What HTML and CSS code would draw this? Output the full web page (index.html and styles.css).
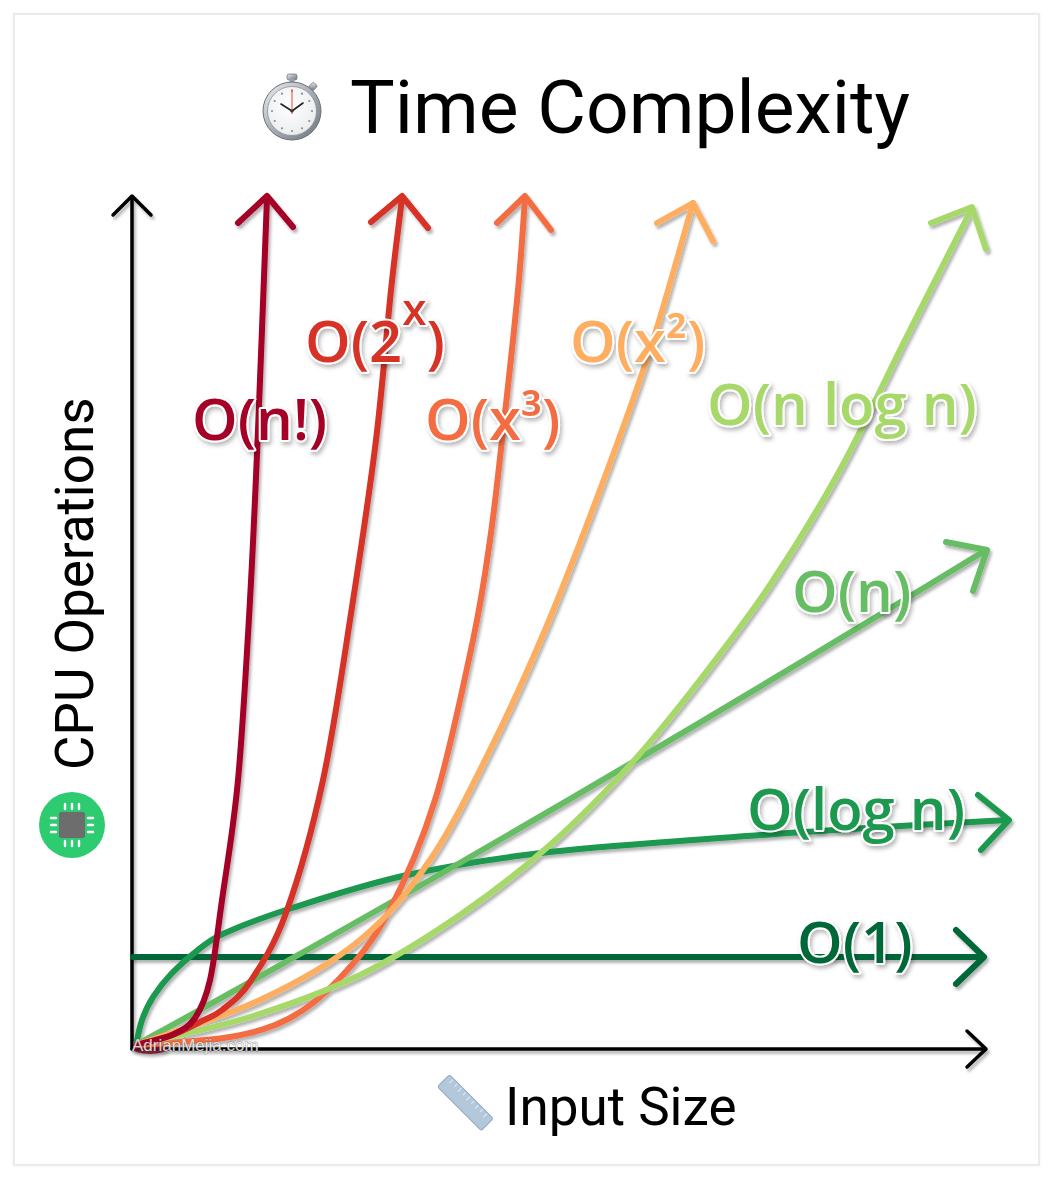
FILE: index.html
```html
<!DOCTYPE html>
<html lang="en">
<head>
<meta charset="utf-8">
<title>Time Complexity</title>
<link rel="stylesheet" href="styles.css">
</head>
<body>
<div class="card">
  <header class="title-row">
    <svg class="stopwatch" viewBox="0 0 68 68" aria-hidden="true">
      <defs>
        <linearGradient id="swCase" x1="0" y1="0" x2="1" y2="1">
          <stop offset="0" stop-color="#eef0f2"/>
          <stop offset="0.5" stop-color="#a7adb4"/>
          <stop offset="1" stop-color="#6c737b"/>
        </linearGradient>
        <radialGradient id="swFace" cx="0.45" cy="0.4" r="0.7">
          <stop offset="0" stop-color="#ffffff"/>
          <stop offset="0.8" stop-color="#eceef0"/>
          <stop offset="1" stop-color="#c6cbd0"/>
        </radialGradient>
      </defs>
      <rect class="sw-metal" x="29" y="1" width="10" height="6" rx="2"/>
      <rect class="sw-stem" x="31.5" y="6" width="5" height="5"/>
      <rect class="sw-metal" x="52" y="10" width="6" height="7" rx="1.5" transform="rotate(45 55 13.5)"/>
      <circle class="sw-case" cx="34" cy="38" r="29"/>
      <circle class="sw-face" cx="34" cy="38" r="24.5"/>
      <g class="sw-ticks">
        <circle cx="34" cy="18" r="1.1"/><circle cx="44" cy="20.7" r="1.1"/><circle cx="51.3" cy="28" r="1.1"/>
        <circle cx="54" cy="38" r="1.1"/><circle cx="51.3" cy="48" r="1.1"/><circle cx="44" cy="55.3" r="1.1"/>
        <circle cx="34" cy="58" r="1.1"/><circle cx="24" cy="55.3" r="1.1"/><circle cx="16.7" cy="48" r="1.1"/>
        <circle cx="14" cy="38" r="1.1"/><circle cx="16.7" cy="28" r="1.1"/><circle cx="24" cy="20.7" r="1.1"/>
      </g>
      <path class="sw-hand" d="M34 38 L23 31"/>
      <path class="sw-hand" d="M34 38 L45 30"/>
      <path class="sw-sec" d="M34 41 L34 16"/>
      <circle class="sw-pin" cx="34" cy="38" r="1.6"/>
    </svg>
    <h1 class="title">Time Complexity</h1>
  </header>

  <svg class="chart" width="1023" height="999" viewBox="15 165 1023 999">
    <defs>
      <filter id="lineShadow" x="-10%" y="-10%" width="120%" height="120%">
        <feDropShadow dx="2" dy="3" stdDeviation="1.6" flood-color="#000" flood-opacity="0.3"/>
      </filter>
      <filter id="labelShadow" x="-10%" y="-20%" width="130%" height="150%">
        <feDropShadow dx="2" dy="3" stdDeviation="2" flood-color="#000" flood-opacity="0.28"/>
      </filter>
    </defs>

    <!-- axes -->
    <g filter="url(#lineShadow)">
      <path class="axis" d="M132 1049 L132 198"/>
      <path class="axis" d="M113 215 L132 196 L151 215"/>
      <path class="axis" d="M132 1049 L984 1049"/>
      <path class="axis" d="M967 1031 L986 1049 L967 1067"/>
    </g>

    <!-- curves -->
    <g filter="url(#lineShadow)">
      <ellipse class="origin-blob" cx="150" cy="1049" rx="17" ry="5"/>

      <path class="curve c-one" d="M133 957 L983 957"/>
      <path class="curve c-one" d="M956 930 L984 957 L956 984"/>

      <path class="curve c-log" d="M136 1045 C137 1040.8 139.2 1028 142 1020 C144.8 1012 148 1004.8 153 997 C158 989.2 164.5 980.8 172 973 C179.5 965.2 189.2 956.7 198 950 C206.8 943.3 209.3 940 225 933 C240.7 926 261.7 917.7 292 908 C322.3 898.3 365.5 884.2 407 875 C448.5 865.8 488.8 859.2 541 853 C593.2 846.8 665.7 842.2 720 838 C774.3 833.8 819 831 867 828 C915 825 984.5 821.3 1008 820"/>
      <path class="curve c-log" d="M978 795 L1009 820 L981 850"/>

      <path class="curve c-n" d="M136 1045 Q520 835 986 550"/>
      <path class="curve c-n" d="M946 542 L987 550 L973 591"/>

      <path class="curve c-cube" d="M136 1045 C151.7 1043.7 204.3 1041.5 230 1037 C255.7 1032.5 271.7 1027.8 290 1018 C308.3 1008.2 323.7 995.5 340 978 C356.3 960.5 372.2 942.7 388 913 C403.8 883.3 420.8 845.5 435 800 C449.2 754.5 463.8 683.3 473 640 C482.2 596.7 485.2 573.3 490 540 C494.8 506.7 497.3 481.7 502 440 C506.7 398.3 514.2 330.3 518 290 C521.8 249.7 523.8 213.3 525 198"/>
      <path class="curve c-cube" d="M497 223 L525 196 L551 230"/>

      <path class="curve c-sq" d="M136 1045 C156.7 1037.5 222.7 1017.5 260 1000 C297.3 982.5 331.7 963.3 360 940 C388.3 916.7 408.3 891.7 430 860 C451.7 828.3 470.8 788.3 490 750 C509.2 711.7 526.7 673.3 545 630 C563.3 586.7 582.5 536.7 600 490 C617.5 443.3 634.5 397.8 650 350 C665.5 302.2 685.8 227.5 693 203"/>
      <path class="curve c-sq" d="M657 223 L693 203 L713 241"/>

      <path class="curve c-nlog" d="M136 1045 C155 1040.3 212.7 1028.7 250 1017 C287.3 1005.3 325 992 360 975 C395 958 428.3 936.7 460 915 C491.7 893.3 521.7 870 550 845 C578.3 820 605 792.5 630 765 C655 737.5 676.7 710 700 680 C723.3 650 746.7 620 770 585 C793.3 550 817.5 510.8 840 470 C862.5 429.2 883 383.7 905 340 C927 296.3 960.8 230 972 208"/>
      <path class="curve c-nlog" d="M931 223 L972 207 L986 249"/>

      <path class="curve c-exp" d="M136 1045 C142 1043.3 161.3 1038.8 172 1035 C182.7 1031.2 191.7 1026.2 200 1022 C208.3 1017.8 213.7 1016.7 222 1010 C230.3 1003.3 239.3 998.2 250 982 C260.7 965.8 273.8 946.7 286 913 C298.2 879.3 312 831 323 780 C334 729 343.2 663.7 352 607 C360.8 550.3 369.5 492.8 376 440 C382.5 387.2 386.7 330.3 391 290 C395.3 249.7 400.2 213.3 402 198"/>
      <path class="curve c-exp" d="M371 222 L402 196 L428 228"/>

      <path class="curve c-fact" d="M136 1045 C142 1043.3 162.2 1039.5 172 1035 C181.8 1030.5 188.7 1027.2 195 1018 C201.3 1008.8 205.5 999.7 210 980 C214.5 960.3 217.3 933.3 222 900 C226.7 866.7 233.3 830 238 780 C242.7 730 246.7 658.3 250 600 C253.3 541.7 255.2 497 258 430 C260.8 363 265.5 236.7 267 198"/>
      <path class="curve c-fact" d="M238 223 L267 196 L293 227"/>
    </g>

    <text class="watermark" x="132" y="1051">AdrianMejia.com</text>

    <!-- labels -->
    <g filter="url(#labelShadow)">
      <text class="lbl l-fact" x="192" y="440">O(n!)</text>
      <text class="lbl l-exp" x="305" y="362">O(2<tspan class="sup" dy="-37">x</tspan><tspan dy="37">)</tspan></text>
      <text class="lbl l-cube" x="425" y="440">O(x³)</text>
      <text class="lbl l-sq" x="570" y="362">O(x²)</text>
      <text class="lbl l-nlog" x="707" y="425">O(n log n)</text>
      <text class="lbl l-n" x="792" y="612">O(n)</text>
      <text class="lbl l-log" x="747" y="830">O(log n)</text>
      <text class="lbl l-one" x="797" y="963">O(1)</text>
    </g>

    <!-- y axis label with CPU icon -->
    <g class="cpu">
      <circle class="cpu-bg" cx="72" cy="825" r="33"/>
      <rect class="cpu-chip" x="59" y="812" width="26" height="26" rx="2"/>
      <path class="cpu-pins" d="M65 804 V809 M72 804 V809 M79 804 V809 M65 841 V846 M72 841 V846 M79 841 V846 M51 818 H56 M51 825 H56 M51 832 H56 M88 818 H93 M88 825 H93 M88 832 H93"/>
    </g>
    <text class="axis-label" transform="translate(93 770) rotate(-90)">CPU Operations</text>

    <!-- x axis label with ruler icon -->
    <g class="ruler" transform="rotate(45 465 1103)">
      <rect class="ruler-body" x="434" y="1094" width="62" height="17" rx="2"/>
      <path class="ruler-ticks" d="M440 1095 V1100 M446 1095 V1099 M452 1095 V1100 M458 1095 V1099 M464 1095 V1100 M470 1095 V1099 M476 1095 V1100 M482 1095 V1099 M488 1095 V1100"/>
    </g>
    <text class="axis-label" x="505" y="1125">Input Size</text>
  </svg>
</div>
</body>
</html>
```

FILE: styles.css
```css
html, body {
  margin: 0;
  padding: 0;
  background: #ffffff;
}

.card {
  margin: 13px;
  width: 1023px;
  height: 1149px;
  border: 2px solid #ebebeb;
  box-shadow: 0 0 3px rgba(0, 0, 0, 0.05);
  background: #ffffff;
  overflow: hidden;
}

.title-row {
  display: flex;
  align-items: flex-start;
  gap: 24px;
  height: 150px;
  padding: 55px 0 0 243px;
  box-sizing: border-box;
}

.stopwatch {
  flex: none;
  width: 68px;
  height: 68px;
  margin-top: 3px;
}

.sw-metal { fill: url(#swCase); stroke: #777; stroke-width: 0.8; }
.sw-stem { fill: #9aa0a7; }
.sw-case { fill: url(#swCase); stroke: #6a7076; stroke-width: 1; }
.sw-face { fill: url(#swFace); stroke: #8d939a; stroke-width: 0.8; }
.sw-ticks { fill: #8a8f96; }
.sw-hand { stroke: #222; stroke-width: 1.6; stroke-linecap: round; fill: none; }
.sw-sec { stroke: #e8462c; stroke-width: 1; fill: none; }
.sw-pin { fill: #333; }

.title {
  margin: 0;
  font-family: Roboto, "Liberation Sans", sans-serif;
  font-weight: 400;
  font-size: 75px;
  line-height: 75px;
  color: #000;
}

.chart {
  display: block;
}

.axis {
  fill: none;
  stroke: #000;
  stroke-width: 3.5;
  stroke-linecap: round;
  stroke-linejoin: round;
}

.curve {
  fill: none;
  stroke-width: 6;
  stroke-linecap: round;
  stroke-linejoin: round;
}

.c-fact { stroke: #a50026; }
.c-exp  { stroke: #d73027; }
.c-cube { stroke: #f46d43; }
.c-sq   { stroke: #fdae61; }
.c-nlog { stroke: #a6d96a; }
.c-n    { stroke: #66bd63; }
.c-log  { stroke: #1a9850; }
.c-one  { stroke: #006837; }

.origin-blob { fill: #6e1020; opacity: 0.85; }

.lbl {
  font-family: "Open Sans", "Liberation Sans", sans-serif;
  font-weight: 600;
  font-size: 58px;
  stroke: #ffffff;
  stroke-width: 4px;
  stroke-linejoin: round;
  paint-order: stroke;
}

.lbl .sup { font-size: 44px; }

.l-fact { fill: #a50026; }
.l-exp  { fill: #d73027; }
.l-cube { fill: #f46d43; }
.l-sq   { fill: #fdae61; }
.l-nlog { fill: #a6d96a; }
.l-n    { fill: #66bd63; }
.l-log  { fill: #1a9850; }
.l-one  { fill: #006837; }

.watermark {
  font-family: "Liberation Sans", Arial, sans-serif;
  font-size: 17px;
  fill: rgba(255, 255, 255, 0.8);
  stroke: rgba(70, 70, 70, 0.55);
  stroke-width: 0.9px;
  paint-order: stroke;
}

.axis-label {
  font-family: Roboto, "Liberation Sans", sans-serif;
  font-weight: 400;
  font-size: 53px;
  fill: #000;
}

.cpu-bg { fill: #2ecc71; }
.cpu-chip { fill: #6d6d6d; }
.cpu-pins { stroke: #ffffff; stroke-width: 2.4; stroke-linecap: round; fill: none; }

.ruler-body { fill: #b4c8dc; stroke: #93a9c0; stroke-width: 1; }
.ruler-ticks { stroke: #e3ecf5; stroke-width: 1; fill: none; }
```
